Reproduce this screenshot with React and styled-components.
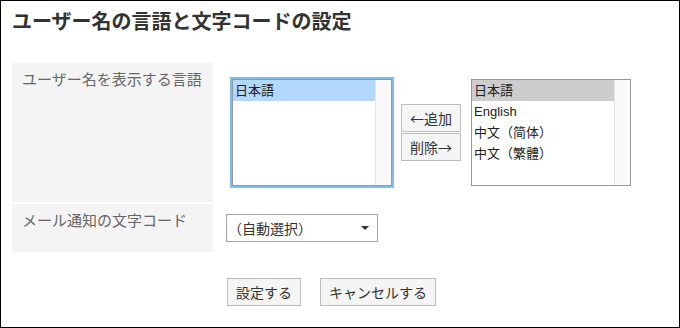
import React from "react";
import styled, { createGlobalStyle } from "styled-components";

const GlobalStyle = createGlobalStyle`
  body {
    margin: 0;
    background: #fff;
    font-family: "Liberation Sans", "Noto Sans CJK JP", sans-serif;
  }
`;

const Page = styled.div`
  width: 680px;
  height: 328px;
  box-sizing: border-box;
  border: 1px solid #000;
  padding: 7px 0 0 11px;
  color: #333;
`;

const Title = styled.h1`
  margin: 0;
  font-size: 20px;
  line-height: 28px;
  font-weight: bold;
  color: #333;
`;

const Form = styled.div`
  display: grid;
  grid-template-columns: 201px 1fr;
  column-gap: 13px;
  row-gap: 2px;
  margin-top: 27px;
`;

const Label = styled.div`
  background: #f4f4f4;
  color: #666;
  font-size: 15px;
  line-height: 22px;
  padding: 6px 10px;
  height: ${(p) => p.height}px;
  box-sizing: border-box;
`;

const Field = styled.div`
  display: flex;
  align-items: center;
`;

const ListBox = styled.div`
  display: flex;
  width: 160px;
  height: 107px;
  box-sizing: border-box;
  border: 1px solid #999;
  background: #fff;
  margin-left: ${(p) => p.offset || 0}px;
  box-shadow: ${(p) => (p.focused ? "0 0 0 2px #80bde8" : "none")};
`;

const Items = styled.div`
  flex: 1;
`;

const Item = styled.div`
  font-size: 13px;
  line-height: 21px;
  height: 21px;
  padding: 0 2px;
  color: #222;
  white-space: nowrap;
  background: ${(p) => p.bg || "transparent"};
`;

const Track = styled.div`
  width: 15px;
  background: #fafafa;
  border-left: 1px solid #e6e6e6;
`;

const MoveButtons = styled.div`
  display: flex;
  flex-direction: column;
  gap: 1px;
  margin: 0 10px 0 9px;
`;

const Button = styled.button`
  height: 28px;
  padding: 0 8px;
  box-sizing: border-box;
  border: 1px solid #bdbdbd;
  background: #f5f5f5;
  color: #333;
  font-family: "Noto Sans CJK JP", sans-serif;
  font-size: 14px;
  line-height: 26px;
  white-space: nowrap;
  border-radius: 0;
`;

const Select = styled.div`
  display: flex;
  align-items: center;
  justify-content: space-between;
  width: 152px;
  height: 28px;
  box-sizing: border-box;
  border: 1px solid #a5a5a5;
  padding: 0 8px 0 1px;
  font-size: 14px;
  color: #333;
  background: #fff;
`;

const Arrow = styled.span`
  width: 0;
  height: 0;
  border-left: 4px solid transparent;
  border-right: 4px solid transparent;
  border-top: 4px solid #333;
`;

const Actions = styled.div`
  display: flex;
  gap: 19px;
  margin: 26px 0 0 215px;
`;

const ListItems = ({ items, selected, selectedBg }) => (
  <Items>
    {items.map((name, i) => (
      <Item key={name} bg={i === selected ? selectedBg : null}>
        {name}
      </Item>
    ))}
  </Items>
);

const App = () => {
  return (
    <Page>
      <GlobalStyle />
      <Title>ユーザー名の言語と文字コードの設定</Title>
      <Form>
        <Label height={139}>ユーザー名を表示する言語</Label>
        <Field>
          <ListBox offset={6} focused>
            <ListItems items={["日本語"]} selected={0} selectedBg="#b4d7fe" />
            <Track />
          </ListBox>
          <MoveButtons>
            <Button>←追加</Button>
            <Button>削除→</Button>
          </MoveButtons>
          <ListBox>
            <ListItems
              items={["日本語", "English", "中文（简体）", "中文（繁體）"]}
              selected={0}
              selectedBg="#cdcdcd"
            />
            <Track />
          </ListBox>
        </Field>
        <Label height={48}>メール通知の文字コード</Label>
        <Field>
          <Select>
            <span>（自動選択）</span>
            <Arrow />
          </Select>
        </Field>
      </Form>
      <Actions>
        <Button>設定する</Button>
        <Button>キャンセルする</Button>
      </Actions>
    </Page>
  );
};

export default App;
